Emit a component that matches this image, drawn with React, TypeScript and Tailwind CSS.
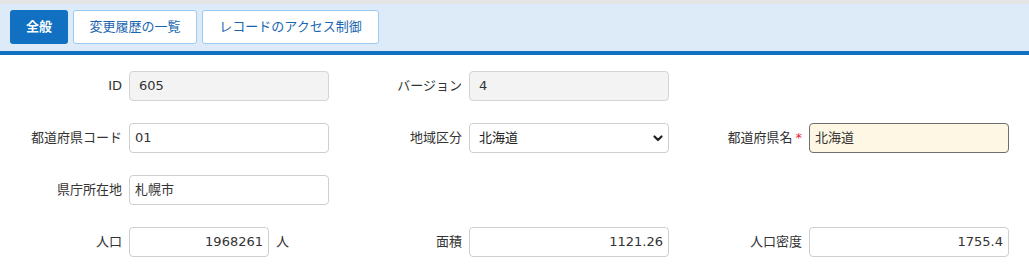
import React from 'react';

const font = { fontFamily: '"DejaVu Sans", "Noto Sans CJK JP", sans-serif' };

function Label({ text, required }: { text: string; required?: boolean }) {
  return (
    <div className="flex w-[122px] shrink-0 items-center justify-end text-[13px] text-[#333]">
      {text}
      {required && <span className="ml-[3px] text-[#e8203a]">*</span>}
    </div>
  );
}

function Field({
  label,
  value,
  readOnly,
  required,
  align = 'left',
  width = 'w-[200px]',
  unit,
}: {
  label: string;
  value: string;
  readOnly?: boolean;
  required?: boolean;
  align?: 'left' | 'right';
  width?: string;
  unit?: string;
}) {
  let box = 'bg-white border-[#cfcfcf]';
  if (readOnly) box = 'bg-[#f3f3f3] border-[#d4d4d4]';
  if (required) box = 'bg-[#fef7e3] border-[#6f6f6f]';
  return (
    <div className="flex w-[340px] items-center">
      <Label text={label} required={required} />
      <div className="ml-[7px] flex items-center">
        <div
          className={`flex h-[30px] ${width} items-center rounded-[4px] border px-[5px] text-[13px] text-[#333] ${box} ${
            align === 'right' ? 'justify-end' : ''
          } ${readOnly ? 'pl-[9px]' : ''}`}
        >
          {value}
        </div>
        {unit && <span className="ml-[7px] text-[13px] text-[#333]">{unit}</span>}
      </div>
    </div>
  );
}

function SelectField({ label, value }: { label: string; value: string }) {
  return (
    <div className="flex w-[340px] items-center">
      <Label text={label} />
      <div className="ml-[7px] flex h-[30px] w-[200px] items-center justify-between rounded-[4px] border border-[#cfcfcf] bg-white pl-[9px] pr-[4px] text-[13px] text-[#222]">
        <span>{value}</span>
        <svg width="12" height="12" viewBox="0 0 12 12" fill="none">
          <path d="M2.5 4.5 L6 8 L9.5 4.5" stroke="#222" strokeWidth="2.2" strokeLinecap="round" strokeLinejoin="round" />
        </svg>
      </div>
    </div>
  );
}

export default function App() {
  return (
    <div className="h-[268px] w-[1029px] overflow-hidden bg-white" style={font}>
      {/* tab bar */}
      <div className="h-[4px] bg-[#e4e4e4]" />
      <div className="flex h-[47px] items-start gap-[5px] bg-[#ddebf8] pl-[10px] pt-[6px]">
        <button className="h-[34px] w-[58px] rounded-[3px] bg-[#1170c1] text-[13px] font-bold text-white">全般</button>
        <button className="h-[34px] w-[124px] rounded-[3px] border border-[#9ccaf3] bg-white text-[13px] text-[#1a66b0]">
          変更履歴の一覧
        </button>
        <button className="h-[34px] w-[177px] rounded-[3px] border border-[#9ccaf3] bg-white text-[13px] text-[#1a66b0]">
          レコードのアクセス制御
        </button>
      </div>
      <div className="h-[4px] bg-[#1170c1]" />

      {/* form */}
      <div className="flex flex-col gap-[22px] pt-[16px]">
        <div className="flex">
          <Field label="ID" value="605" readOnly />
          <Field label="バージョン" value="4" readOnly />
        </div>
        <div className="flex">
          <Field label="都道府県コード" value="01" />
          <SelectField label="地域区分" value="北海道" />
          <Field label="都道府県名" value="北海道" required />
        </div>
        <div className="flex">
          <Field label="県庁所在地" value="札幌市" />
        </div>
        <div className="flex">
          <Field label="人口" value="1968261" align="right" width="w-[140px]" unit="人" />
          <Field label="面積" value="1121.26" align="right" />
          <Field label="人口密度" value="1755.4" align="right" />
        </div>
      </div>
    </div>
  );
}
